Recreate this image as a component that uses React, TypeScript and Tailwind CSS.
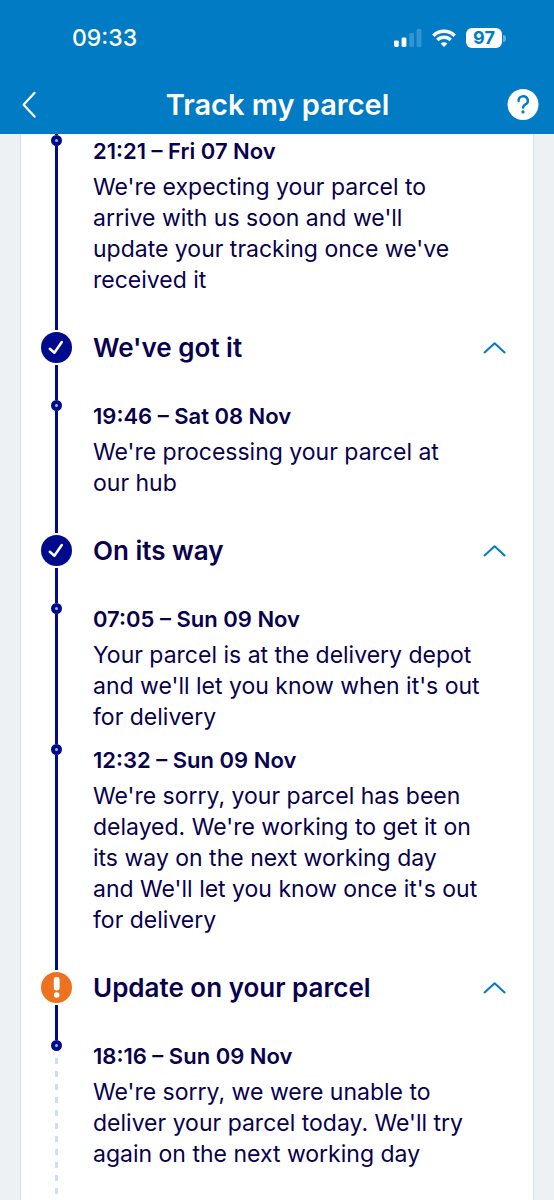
import { useState } from "react";
import clsx from "clsx";

interface TrackingEvent {
  time: string;
  text: string;
}

interface TrackingStage {
  title?: string;
  status?: "done" | "alert";
  events: TrackingEvent[];
}

const stages: TrackingStage[] = [
  {
    events: [
      {
        time: "21:21 – Fri 07 Nov",
        text: "We're expecting your parcel to arrive with us soon and we'll update your tracking once we've received it",
      },
    ],
  },
  {
    title: "We've got it",
    status: "done",
    events: [
      {
        time: "19:46 – Sat 08 Nov",
        text: "We're processing your parcel at our hub",
      },
    ],
  },
  {
    title: "On its way",
    status: "done",
    events: [
      {
        time: "07:05 – Sun 09 Nov",
        text: "Your parcel is at the delivery depot and we'll let you know when it's out for delivery",
      },
      {
        time: "12:32 – Sun 09 Nov",
        text: "We're sorry, your parcel has been delayed. We're working to get it on its way on the next working day and We'll let you know once it's out for delivery",
      },
    ],
  },
  {
    title: "Update on your parcel",
    status: "alert",
    events: [
      {
        time: "18:16 – Sun 09 Nov",
        text: "We're sorry, we were unable to deliver your parcel today. We'll try again on the next working day",
      },
    ],
  },
];

function StatusBar() {
  return (
    <div className="flex h-[76px] items-center justify-between pl-[72px] pr-12">
      <span className="text-[23px] font-medium">09:33</span>
      <div className="flex items-center gap-2.5">
        <svg className="h-[18px] w-7" viewBox="0 0 28 18" fill="currentColor" aria-hidden="true">
          <rect x="0" y="11.5" width="4.8" height="6.5" rx="1.4" />
          <rect x="7.6" y="8.5" width="4.8" height="9.5" rx="1.4" />
          <rect x="15.2" y="4" width="4.8" height="14" rx="1.4" opacity="0.2" />
          <rect x="22.6" y="0" width="4.8" height="18" rx="1.4" opacity="0.2" />
        </svg>
        <svg className="h-[18px] w-6" viewBox="0 0 24 18" fill="none" stroke="currentColor" strokeWidth="3.4" aria-hidden="true">
          <path d="M1.3 6.7a15.2 15.2 0 0 1 21.4 0" />
          <path d="M5.3 11a9.6 9.6 0 0 1 13.4 0" />
          <path d="M12 18l-3.4-3.5a4.9 4.9 0 0 1 6.8 0z" fill="currentColor" stroke="none" />
        </svg>
        <div className="flex items-center gap-px">
          <span className="flex h-5 w-9 items-center justify-center rounded-md bg-white text-lg font-bold text-[#007bc4]">
            97
          </span>
          <span className="h-[7px] w-[3px] rounded-r-full bg-white/40" />
        </div>
      </div>
    </div>
  );
}

function NavBar() {
  return (
    <div className="flex h-[58px] items-center justify-between pl-4 pr-[15px]">
      <button type="button" aria-label="Back" className="flex h-8 w-8 items-center">
        <svg className="h-7 w-6" viewBox="0 0 24 28" fill="none" stroke="currentColor" strokeWidth="2.2" strokeLinecap="round" strokeLinejoin="round">
          <path d="M18.6 1.8L7.6 13.7L18.6 25.6" />
        </svg>
      </button>
      <h1 className="text-[29px] font-semibold">Track my parcel</h1>
      <button type="button" aria-label="Help">
        <svg className="h-8 w-8" viewBox="0 0 32 32">
          <circle cx="16" cy="15.5" r="15.5" fill="#fff" />
          <path d="M11.6 11.7a4.6 4.3 0 1 1 6.8 3.7c-1.6.9-2.3 1.6-2.3 3.2" fill="none" stroke="#007bc4" strokeWidth="2.5" strokeLinecap="round" />
          <circle cx="16" cy="22.9" r="1.6" fill="#007bc4" />
        </svg>
      </button>
    </div>
  );
}

function StageIcon({ status }: { status: TrackingStage["status"] }) {
  if (status === "alert") {
    return (
      <svg className="my-0.5 h-[31px] w-[31px]" viewBox="0 0 31 31" aria-hidden="true">
        <circle cx="15.5" cy="15.5" r="15.5" fill="#ec7220" />
        <rect x="12.8" y="5" width="5.8" height="13.4" rx="2.4" fill="#fff" />
        <circle cx="15.7" cy="23" r="2.8" fill="#fff" />
      </svg>
    );
  }
  return (
    <svg className="my-0.5 h-[31px] w-[31px]" viewBox="0 0 31 31" aria-hidden="true">
      <circle cx="15.5" cy="15.5" r="15.5" fill="#000a8c" />
      <path d="M8.8 16.8L13.4 20.8L20.8 10" fill="none" stroke="#fff" strokeWidth="2.5" strokeLinecap="round" strokeLinejoin="round" />
    </svg>
  );
}

function EventRow({ event, last }: { event: TrackingEvent; last: boolean }) {
  return (
    <li className={clsx("flex", last && "flex-1")}>
      <div className="flex w-[31px] shrink-0 flex-col items-center">
        <span className="h-[11px] w-[11px] rounded-full border-4 border-[#000a8c] bg-[#8cc4ee]" />
        {last ? (
          <span className="mt-[7px] w-[3px] flex-1 bg-[repeating-linear-gradient(to_bottom,#c9e0ef_0_6px,transparent_6px_13px)]" />
        ) : (
          <span className="w-[3px] flex-1 bg-[#000a8c]" />
        )}
      </div>
      <div className="ml-[21px] flex-1 pb-[11px] pr-[27px]">
        <h3 className="text-[22px] font-semibold leading-8">{event.time}</h3>
        <p className="mt-[5px] text-[23px] leading-[31px]">{event.text}</p>
      </div>
    </li>
  );
}

function Stage({ stage, last }: { stage: TrackingStage; last: boolean }) {
  const [open, setOpen] = useState(true);

  return (
    <section className={clsx("flex flex-col", last && "flex-1")}>
      {stage.title && (
        <h2>
          <button
            type="button"
            aria-expanded={open}
            onClick={() => setOpen(!open)}
            className="flex w-full text-left"
          >
            <span className="flex w-[31px] shrink-0 flex-col items-center">
              <span className="h-[23px] w-[3px] bg-[#000a8c]" />
              <StageIcon status={stage.status} />
              <span className="h-[35px] w-[3px] bg-[#000a8c]" />
            </span>
            <span className="ml-[21px] mt-[23px] flex h-[35px] flex-1 items-center justify-between">
              <span className="text-[26px] font-semibold">{stage.title}</span>
              <svg
                className={clsx("h-3 w-6", !open && "rotate-180")}
                viewBox="0 0 24 12"
                fill="none"
                stroke="#007bc4"
                strokeWidth="2"
                strokeLinecap="round"
                strokeLinejoin="round"
                aria-hidden="true"
              >
                <path d="M1.6 10.4L11.6 1.2L21.6 10.4" />
              </svg>
            </span>
          </button>
        </h2>
      )}
      {open && (
        <ol className="flex flex-1 flex-col">
          {stage.events.map((event, i) => (
            <EventRow
              key={event.time}
              event={event}
              last={last && i === stage.events.length - 1}
            />
          ))}
        </ol>
      )}
    </section>
  );
}

export default function App() {
  return (
    <div className="flex min-h-screen flex-col bg-[#edf1f4] font-['Inter','Liberation_Sans',sans-serif] text-[#08014d]">
      <header className="bg-[#007bc4] text-white">
        <StatusBar />
        <NavBar />
      </header>

      <main className="mx-5 flex flex-1 flex-col border-x border-[#d3e2ef] bg-white pl-5 pr-[26px]">
        <span className="ml-[14px] h-px w-[3px] bg-[#000a8c]" />
        {stages.map((stage, i) => (
          <Stage key={i} stage={stage} last={i === stages.length - 1} />
        ))}
      </main>
    </div>
  );
}
